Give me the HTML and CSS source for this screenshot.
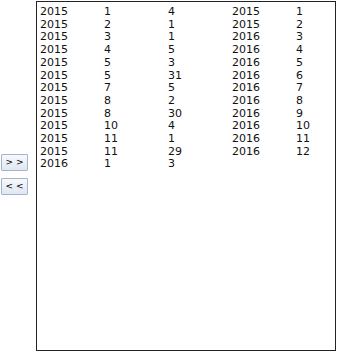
FILE: index.html
```html
<!DOCTYPE html>
<html>
<head>
<meta charset="utf-8">
<link rel="stylesheet" href="styles.css">
</head>
<body>
<div class="wrap">
  <div class="btns">
    <button class="btn">&gt; &gt;</button>
    <button class="btn">&lt; &lt;</button>
  </div>
  <div class="box">
    <div class="grid">
      <span>2015</span><span>1</span><span>4</span><span>2015</span><span>1</span>
      <span>2015</span><span>2</span><span>1</span><span>2015</span><span>2</span>
      <span>2015</span><span>3</span><span>1</span><span>2016</span><span>3</span>
      <span>2015</span><span>4</span><span>5</span><span>2016</span><span>4</span>
      <span>2015</span><span>5</span><span>3</span><span>2016</span><span>5</span>
      <span>2015</span><span>5</span><span>31</span><span>2016</span><span>6</span>
      <span>2015</span><span>7</span><span>5</span><span>2016</span><span>7</span>
      <span>2015</span><span>8</span><span>2</span><span>2016</span><span>8</span>
      <span>2015</span><span>8</span><span>30</span><span>2016</span><span>9</span>
      <span>2015</span><span>10</span><span>4</span><span>2016</span><span>10</span>
      <span>2015</span><span>11</span><span>1</span><span>2016</span><span>11</span>
      <span>2015</span><span>11</span><span>29</span><span>2016</span><span>12</span>
      <span>2016</span><span>1</span><span>3</span><span></span><span></span>
    </div>
  </div>
</div>
</body>
</html>
```

FILE: styles.css
```css
html, body {
  margin: 0;
  padding: 0;
  background: #fff;
}
body {
  padding: 1px;
}
.wrap {
  display: flex;
  align-items: center;
}
.btns {
  display: flex;
  flex-direction: column;
  gap: 7px;
  width: 27px;
  margin-right: 8px;
  margin-top: -3px;
}
.btn {
  width: 27px;
  height: 17px;
  padding: 0;
  margin: 0;
  border: 1px solid #a3b5cc;
  border-radius: 1px;
  background: linear-gradient(#f7f9fc, #dfe7f2);
  font-family: "DejaVu Sans", Verdana, sans-serif;
  font-size: 9px;
  line-height: 15px;
  color: #000;
  text-align: center;
}
.box {
  width: 298px;
  height: 348px;
  border: 1px solid #222;
  padding: 0;
  box-sizing: content-box;
  overflow: hidden;
}
.grid {
  display: grid;
  grid-template-columns: repeat(4, 64px) 1fr;
  padding: 4px 0 0 3px;
  font-family: "DejaVu Sans", Verdana, sans-serif;
  font-size: 11px;
  line-height: 12.7px;
  color: #111;
}
```
